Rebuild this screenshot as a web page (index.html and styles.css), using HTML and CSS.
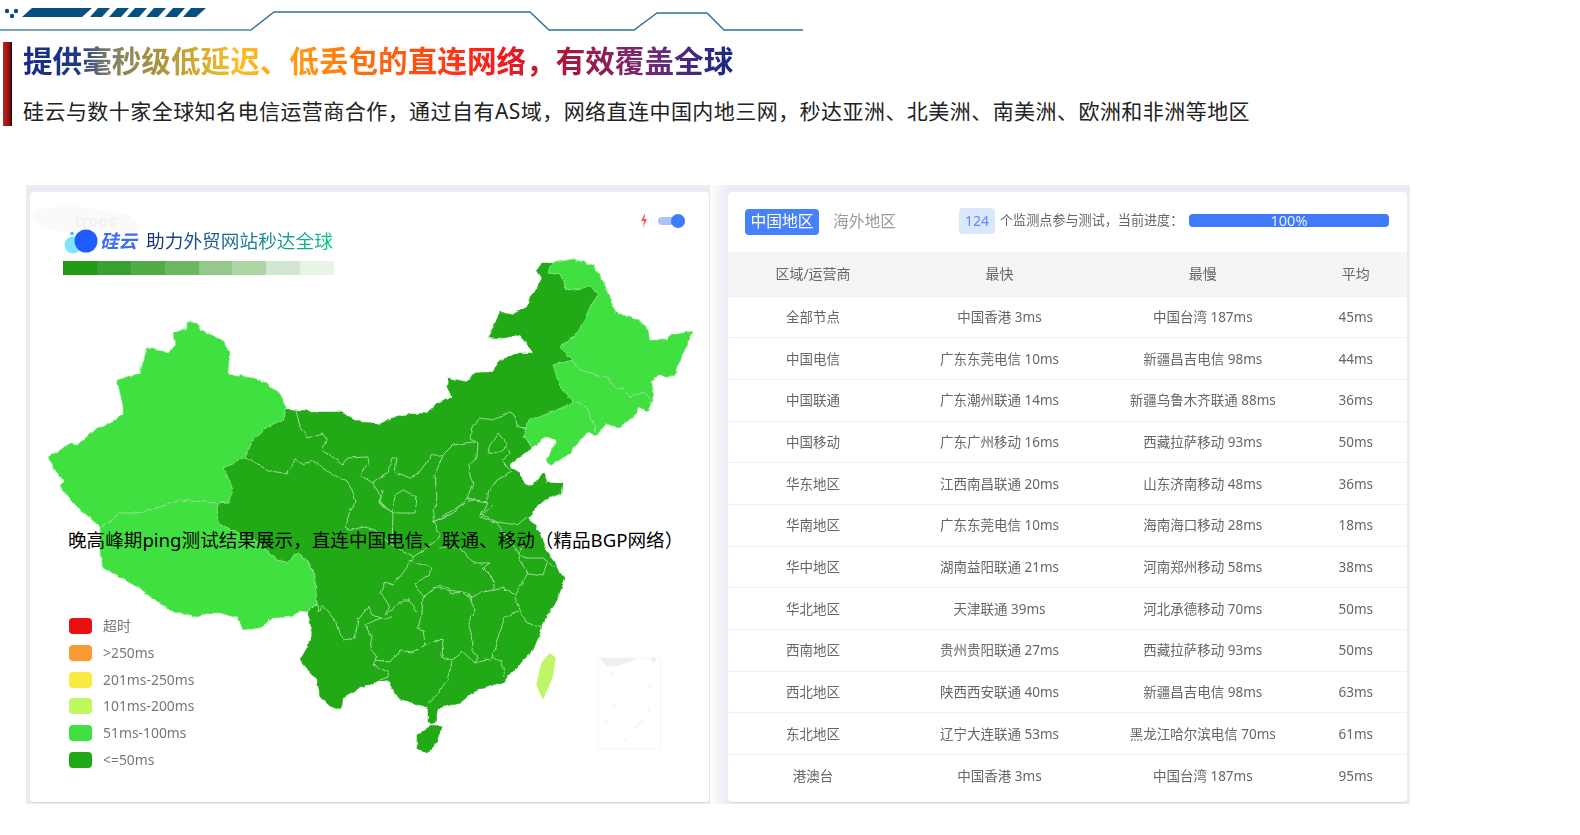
FILE: index.html
```html
<!DOCTYPE html>
<html lang="zh-CN">
<head>
<meta charset="utf-8">
<title>硅云 网络</title>
<link rel="stylesheet" href="styles.css">
</head>
<body>
<header class="top">
  <svg class="deco" viewBox="0 0 806 32" aria-hidden="true">
    <g fill="#05507f">
      <circle cx="7" cy="11" r="2.2"/><circle cx="16" cy="11" r="2.2"/><circle cx="12" cy="16" r="2.2"/>
      <polygon points="22,17 32,8 92,8 82,17"/>
      <polygon points="90,17 98,8 110,8 102,17"/>
      <polygon points="109,17 117,8 129,8 121,17"/>
      <polygon points="127,17 135,8 147,8 139,17"/>
      <polygon points="146,17 154,8 166,8 158,17"/>
      <polygon points="165,17 173,8 185,8 177,17"/>
      <polygon points="183,17 191,8 206,8 196,17"/>
    </g>
    <path d="M0 30H251" stroke="#7ba4bf" stroke-width="2" fill="none"/>
    <path d="M251 30L274 12H530L549 30H634L657 13H707L724 30H803" stroke="#2f7097" stroke-width="1.4" fill="none"/>
  </svg>
  <div class="intro">
    <div class="intro-bar"></div>
    <div class="intro-text">
      <h1 class="title"><span class="title-grad">提供毫秒级低延迟、低丢包的直连网络，有效覆盖全球</span></h1>
      <p class="sub">硅云与数十家全球知名电信运营商合作，通过自有AS域，网络直连中国内地三网，秒达亚洲、北美洲、南美洲、欧洲和非洲等地区</p>
    </div>
  </div>
</header>

<main class="frame">
  <section class="map-card">
    <svg class="map" viewBox="30 192 678 611" aria-hidden="true">
      <defs>
        <filter id="rough" x="0" y="0" width="100%" height="100%" filterUnits="objectBoundingBox">
          <feTurbulence type="fractalNoise" baseFrequency="0.14" numOctaves="2" seed="4" result="n"/>
          <feDisplacementMap in="SourceGraphic" in2="n" scale="4" xChannelSelector="R" yChannelSelector="G"/>
          <feGaussianBlur stdDeviation="0.4"/>
        </filter>
      </defs>
      <path class="blob" d="M33 212C50 203 100 206 130 216C148 226 142 238 110 237C85 237 70 232 50 230C38 226 30 220 33 212Z"/>
      <text class="wm" x="75" y="227">ITDOG</text>
      <g filter="url(#rough)">
        <rect x="30" y="192" width="678" height="611" fill="none"/>
        <path class="dark" d="M287 409L297 410 320 412 340 412 352 418 360 422 373 423 378 425 390 419 402 415 427 413 437 403 452 397 447 387 448 378 467 382 475 373 493 372 498 362 512 355 520 353 533 353 527 343 520 335 503 338 488 337 494 326 500 312 512 315 527 307 530 297 537 288 542 278 537 270 542 263 552 263 548 273 560 275 567 290 590 287 598 295 590 307 585 320 580 330 560 347 573 360 553 365 560 387 572 400 573 403 537 418 530 417 523 437 532 445 528 452 512 462 510 467 520 473 525 483 530 487 543 472 547 483 563 483 562 492 547 498 533 510 532 515 528 518 540 532 547 552 555 562 557 568 565 578 557 600 550 612 542 625 540 633 533 650 517 667 503 682 490 686 473 692 460 703 438 708 435 723 428 722 428 707 420 705 397 698 388 680 377 682 360 688 343 697 342 705 340 710 330 706 320 697 317 680 300 660 307 648 313 633 308 613 317 603 315 580 313 570 307 560 297 553 287 562 277 560 260 543 247 537 218 523 217 503 228 502 233 490 227 475 223 468 245 458 252 442 265 428 282 420Z"/>
        <path class="dark" d="M442 727L432 725 417 735 417 748 427 753 435 745Z"/>
        <path class="light" d="M187 322L197 322 200 330 212 335 222 340 230 353 228 373 257 379 277 390 287 409 282 420 265 428 252 442 245 458 223 468 227 475 233 490 228 502 217 503 218 523 247 537 260 543 277 560 287 562 297 553 307 560 313 570 315 580 317 603 308 612 300 611 293 617 273 618 260 628 243 630 237 618 220 613 210 613 193 617 170 610 155 600 137 587 103 568 100 553 100 527 73 503 62 490 60 486 63 480 55 470 48 457 60 450 70 443 78 444 97 428 110 423 123 414 123 407 117 380 140 373 147 348 167 352 175 347 173 333 187 328Z"/>
        <path class="light" d="M552 263L573 259 593 265 603 280 613 307 617 313 632 317 647 325 650 340 667 340 670 335 692 331 688 343 673 377 660 375 652 380 653 400 647 412 638 407 637 413 620 428 607 423 597 435 587 433 568 455 550 465 547 460 557 440 547 437 533 447 523 437 530 417 537 418 573 403 572 400 560 387 553 365 573 360 560 347 580 330 590 307 598 295 590 287 567 290 560 275 548 273Z"/>
        <g class="lines">
          <path d="M217 503L180 500 160 507 137 513 120 513 103 527"/>
          <path d="M573 360L580 370 607 377 617 390 623 387 630 398 643 392 653 400"/>
          <path d="M573 402L587 407 597 433"/>
          <path d="M296 410L300 427 308 438 323 434 327 440 322 450 333 457 342 465 347 458 367 457 368 463 360 475 373 483 380 495 383 507 393 512 395 495 403 490"/>
          <path d="M373 483L387 473 392 458 397 458 395 472 410 478"/>
          <path d="M245 458L253 461 267 470 287 474 295 460 303 464 313 461 327 471 347 482 352 490 356 502 350 510 345 527 350 530 365 527 375 530 385 540 392 545 413 557 403 573 393 585 385 582 380 593 390 605 385 615 403 600 410 600 417 612"/>
          <path d="M410 478L417 475 432 455 443 455 453 445 472 442 478 443 470 438 472 427 480 418 493 420 510 412 515 415 517 427 527 428"/>
          <path d="M523 437L532 445M478 443L477 457 470 463 468 472 473 483 467 498 453 513 433 522"/>
          <path d="M443 455L435 475 437 498 432 522 435 523 440 537 427 548 413 557"/>
          <path d="M490 445L498 433 508 445 500 453 488 452Z"/>
          <path d="M507 447L510 453 502 460 508 468 512 472 497 480 487 493 487 502 467 498"/>
          <path d="M493 505L482 515 497 522 517 525 527 517"/>
          <path d="M380 503L393 513 415 513 417 497 403 490M382 490L380 503M393 513L392 543"/>
          <path d="M433 522L470 500 488 503 480 517 497 523 503 532 520 555 527 558 543 558 555 568"/>
          <path d="M440 547L460 548 473 563 490 563 483 568 492 577 495 590 482 592 470 598 462 592 450 590 440 585 437 587 423 597 415 583 430 575 432 568 413 562"/>
          <path d="M470 598L475 610 468 623 473 640 472 652 478 657 475 663"/>
          <path d="M495 590L503 588 515 595 528 573 518 558 522 547M528 573L543 575 547 563"/>
          <path d="M515 597L520 610 525 622 542 628M520 610L505 618 498 637 492 658 502 662 505 677"/>
          <path d="M492 658L475 663 463 652 452 660 442 657 443 639 425 645 423 630 418 628 422 613 423 597"/>
          <path d="M423 597L437 587 453 593 467 592 473 602"/>
          <path d="M317 603L318 612 323 605 333 617 343 640 355 638 358 620 368 607 372 615 380 618 392 618"/>
          <path d="M380 618L365 625 372 637 370 648 377 657 373 665 388 672 388 677 380 680"/>
          <path d="M375 660L390 662 400 650 412 652 425 645"/>
          <path d="M452 662L447 680 437 695 428 703"/>
          <path d="M307 560L313 572"/>
        </g>
      </g>
      <path class="taiwan" d="M550 654L555 658 552 677 543 698 537 685 542 663Z"/>
      <g class="inset">
        <rect x="598" y="658" width="63" height="91" rx="1"/>
        <path class="inset-sea" d="M600 658H637C628 664 612 668 606 666Z"/>
        <path class="inset-sea" d="M650 658H657L654 663Z"/>
        <path class="inset-mark" d="M609 675L614 672M648 690L650 684M612 708L616 704M606 724L607 720M636 728L642 720M623 742L627 739M650 708L647 714"/>
      </g>
    </svg>

    <div class="brand soft">
      <svg class="logo" viewBox="0 0 36 26" aria-hidden="true">
        <circle cx="10" cy="17" r="8.5" fill="#7ce6ff"/>
        <circle cx="9" cy="5.5" r="1.8" fill="#38c7f5"/>
        <circle cx="23" cy="13" r="11.5" fill="#1f5cff"/>
      </svg>
      <span class="brand-name">硅云</span>
      <span class="brand-slogan">助力外贸网站秒达全球</span>
    </div>
    <div class="scale soft">
      <i class="s1"></i><i class="s2"></i><i class="s3"></i><i class="s4"></i><i class="s5"></i><i class="s6"></i><i class="s7"></i><i class="s8"></i>
    </div>

    <div class="switch soft">
      <svg class="bolt" viewBox="0 0 8 15" aria-hidden="true"><path d="M5 0L1 8H4L3 15 7 6H4.5Z" fill="#ff5a5a"/></svg>
      <span class="track"><span class="knob"></span></span>
    </div>

    <ul class="legend soft">
      <li><i class="c-red"></i>超时</li>
      <li><i class="c-orange"></i>&gt;250ms</li>
      <li><i class="c-yellow"></i>201ms-250ms</li>
      <li><i class="c-lime"></i>101ms-200ms</li>
      <li><i class="c-green"></i>51ms-100ms</li>
      <li><i class="c-dark"></i>&lt;=50ms</li>
    </ul>

    <p class="note">晚高峰期ping测试结果展示，直连中国电信、联通、移动（精品BGP网络）</p>
  </section>

  <div class="seam"></div>

  <section class="table-card">
    <div class="bar soft">
      <span class="tab active">中国地区</span>
      <span class="tab">海外地区</span>
      <span class="count">124</span>
      <span class="progress-label">个监测点参与测试，当前进度：</span>
      <span class="progress">100%</span>
    </div>
    <div class="grid soft">
      <div class="row head"><span>区域/运营商</span><span>最快</span><span>最慢</span><span>平均</span></div>
      <div class="row"><span>全部节点</span><span>中国香港 3ms</span><span>中国台湾 187ms</span><span>45ms</span></div>
      <div class="row"><span>中国电信</span><span>广东东莞电信 10ms</span><span>新疆昌吉电信 98ms</span><span>44ms</span></div>
      <div class="row"><span>中国联通</span><span>广东潮州联通 14ms</span><span>新疆乌鲁木齐联通 88ms</span><span>36ms</span></div>
      <div class="row"><span>中国移动</span><span>广东广州移动 16ms</span><span>西藏拉萨移动 93ms</span><span>50ms</span></div>
      <div class="row"><span>华东地区</span><span>江西南昌联通 20ms</span><span>山东济南移动 48ms</span><span>36ms</span></div>
      <div class="row"><span>华南地区</span><span>广东东莞电信 10ms</span><span>海南海口移动 28ms</span><span>18ms</span></div>
      <div class="row"><span>华中地区</span><span>湖南益阳联通 21ms</span><span>河南郑州移动 58ms</span><span>38ms</span></div>
      <div class="row"><span>华北地区</span><span>天津联通 39ms</span><span>河北承德移动 70ms</span><span>50ms</span></div>
      <div class="row"><span>西南地区</span><span>贵州贵阳联通 27ms</span><span>西藏拉萨移动 93ms</span><span>50ms</span></div>
      <div class="row"><span>西北地区</span><span>陕西西安联通 40ms</span><span>新疆昌吉电信 98ms</span><span>63ms</span></div>
      <div class="row"><span>东北地区</span><span>辽宁大连联通 53ms</span><span>黑龙江哈尔滨电信 70ms</span><span>61ms</span></div>
      <div class="row last"><span>港澳台</span><span>中国香港 3ms</span><span>中国台湾 187ms</span><span>95ms</span></div>
    </div>
  </section>
</main>
</body>
</html>
```
FILE: styles.css
```css
* { box-sizing: border-box; }
html, body { margin: 0; padding: 0; }
body {
  width: 1580px;
  height: 835px;
  overflow: hidden;
  background: #fff;
  font-family: "Noto Sans", "Noto Sans CJK SC", sans-serif;
}
.soft { filter: blur(0.5px); }

/* header */
.top { height: 185px; }
.deco { display: block; width: 806px; height: 32px; }
.intro { display: flex; margin: 10px 0 0 3px; height: 84px; }
.intro-bar { width: 9px; background: linear-gradient(90deg, #c4211f, #8c1412 65%, #2a0606); }
.intro-text { margin-left: 11px; }
.title { margin: -1px 0 0; font-size: 29.6px; line-height: 40px; font-weight: 700; }
.title-grad {
  display: inline-block;
  background: linear-gradient(90deg, #17298a 0%, #1f3a84 8%, #7f7f68 12%, #a8943f 19%, #fbbf24 30%, #ff9c10 38%, #ff4d10 56%, #ff1a1a 66%, #a8163f 77%, #6d2a78 89%, #14288a 100%);
  -webkit-background-clip: text;
  background-clip: text;
  color: transparent;
}
.sub { margin: 14px 0 0; font-size: 21px; line-height: 32px; letter-spacing: 0.45px; color: #222; white-space: nowrap; }

/* frame */
.frame {
  display: grid;
  grid-template-columns: 679.5px 18px 679.5px;
  width: 1384px;
  height: 619px;
  margin-left: 26px;
  padding: 7px 3px 1px 4px;
  background: #e9edf2;
}
.seam { background: linear-gradient(90deg, #fff, #f6f8fa 30%, #e9edf2); margin: -7px 0 -1px; }

/* map card */
.map-card {
  position: relative;
  background: #fff;
  border-radius: 4px;
  border-right: 1px solid #e3e6ea;
  border-bottom: 1px solid #d5dae0;
  padding: 33px 0 0 33px;
}
.map { position: absolute; left: 0; top: 0; width: 678px; height: 611px; }
.dark { fill: #21aa18; stroke: #21aa18; stroke-width: 0.5; stroke-linejoin: round; }
.light { fill: #41e041; stroke: #a4eaa2; stroke-width: 0.6; stroke-linejoin: round; }
.taiwan { fill: #bff567; stroke: #bff567; stroke-width: 1.5; stroke-linejoin: round; }
.lines path { fill: none; stroke: #9edb9a; stroke-width: 1; stroke-linejoin: round; }
.blob { fill: #fafafa; }
.wm { font-size: 12px; font-weight: 700; letter-spacing: 1px; fill: #f1f1f1; }
.inset rect { fill: #fff; stroke: #f6f6f6; stroke-width: 1; }
.inset-sea { fill: #efefef; }
.inset-mark { fill: none; stroke: #f5f5f5; stroke-width: 1.5; }

.brand { position: relative; display: flex; align-items: center; height: 32px; }
.logo { width: 36px; height: 26px; flex: none; margin-right: 1px; }
.brand-name { font-size: 18.5px; line-height: 18px; font-weight: 700; font-style: italic; color: #3f6cf6; margin-right: 9px; }
.brand-slogan {
  display: inline-block;
  font-size: 18.7px;
  line-height: 20px;
  background: linear-gradient(90deg, #15307f, #1b6a92 45%, #08c78d);
  -webkit-background-clip: text;
  background-clip: text;
  color: transparent;
}
.scale { position: relative; display: flex; width: 271px; height: 14px; margin-top: 4px; }
.scale i { flex: 1; }
.s1 { background: #1f9a12; } .s2 { background: #3aa02e; } .s3 { background: #52ac44; } .s4 { background: #6cb860; }
.s5 { background: #94c98b; } .s6 { background: #abd5a3; } .s7 { background: #d1e7cf; } .s8 { background: #e7f3e5; }

.switch { position: absolute; top: 21px; right: 24px; display: flex; align-items: center; gap: 10px; }
.bolt { width: 8px; height: 15px; }
.track { position: relative; display: block; width: 27px; height: 8px; border-radius: 4px; background: #a9c3fb; }
.knob { position: absolute; right: 0; top: -3px; width: 14px; height: 14px; border-radius: 50%; background: #3f7bfa; }

.legend { position: absolute; left: 39px; top: 421px; margin: 0; padding: 0; list-style: none; color: #777; font-size: 13.9px; line-height: 20px; }
.legend li { display: flex; align-items: center; height: 26.7px; white-space: nowrap; }
.legend i { width: 23px; height: 16px; border-radius: 4px; margin-right: 11px; }
.c-red { background: #e81010; } .c-orange { background: #fa9a32; } .c-yellow { background: #f8ea40; }
.c-lime { background: #c0f860; } .c-green { background: #40e040; } .c-dark { background: #1faa15; }

.note { position: absolute; left: 38px; top: 333.7px; margin: 0; font-size: 18.6px; line-height: 28px; color: #000; white-space: nowrap; }

/* table card */
.table-card {
  background: #fff;
  border-radius: 4px;
  border-bottom: 1px solid #d5dae0;
}
.bar { display: flex; align-items: center; height: 60px; padding-left: 17.5px; }
.tab { display: block; width: 74px; height: 25.5px; line-height: 25px; text-align: center; font-size: 15.8px; color: #9a9a9a; border-radius: 4px; }
.tab.active { background: #4680fb; color: #fff; margin-right: 7.5px; }
.tab + .tab { width: 76px; }
.count { width: 36px; height: 26px; margin: 0 0 3px 56.5px; line-height: 26px; text-align: center; border-radius: 4px; background: #dbe7fd; color: #5a8dfb; font-size: 14px; }
.progress-label { width: 177px; margin: 0 0 5px 5px; font-size: 13.1px; line-height: 18px; color: #666; white-space: nowrap; }
.progress { display: block; width: 200px; height: 13px; margin: 0 0 3px 12px; line-height: 13px; text-align: center; border-radius: 4px; background: #3e7bfa; color: #e8efff; font-size: 14.5px; }

.row {
  display: grid;
  grid-template-columns: 171px 202px 204.6px 101.4px;
  align-items: center;
  height: 41.7px;
  line-height: 20px;
  text-align: center;
  font-size: 13.5px;
  color: #666;
  border-bottom: 1px solid #eef0f3;
  white-space: nowrap;
}
.row.head { height: 44.5px; background: #f5f5f6; font-size: 14px; }
.row.last { border-bottom: 0; }
```
